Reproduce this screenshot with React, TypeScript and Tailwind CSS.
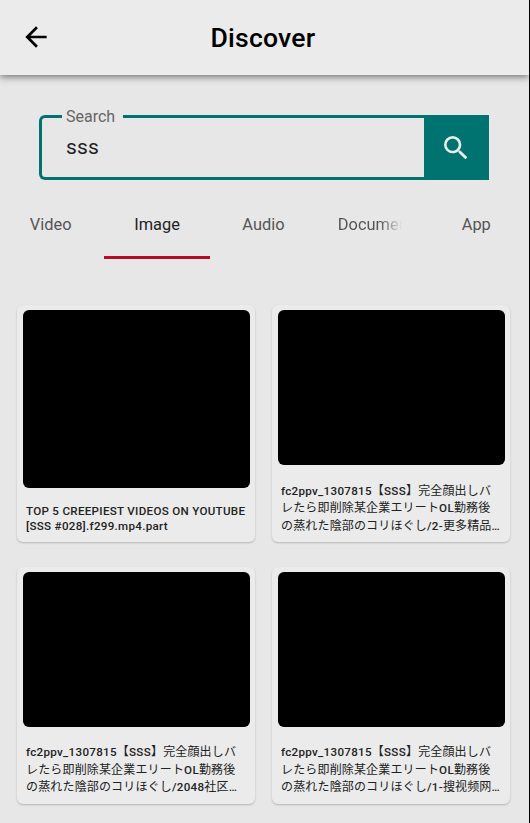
import React from "react";

type Item = { lines: string[]; tall?: boolean };

const tabs = ["Video", "Image", "Audio", "Documents", "App"];

const items: Item[] = [
  { lines: ["TOP 5 CREEPIEST VIDEOS ON YOUTUBE", "[SSS #028].f299.mp4.part"], tall: true },
  { lines: ["fc2ppv_1307815【SSS】完全顔出しバ", "レたら即削除某企業エリートOL勤務後", "の蒸れた陰部のコリほぐし/2-更多精品…"] },
  { lines: ["fc2ppv_1307815【SSS】完全顔出しバ", "レたら即削除某企業エリートOL勤務後", "の蒸れた陰部のコリほぐし/2048社区…"] },
  { lines: ["fc2ppv_1307815【SSS】完全顔出しバ", "レたら即削除某企業エリートOL勤務後", "の蒸れた陰部のコリほぐし/1-搜视频网…"] },
];

/* Latin runs are medium weight, Japanese and Chinese runs are regular. */
function Line({ text }: { text: string }) {
  const runs = text.match(/[\u0020-\u007e\u2026]+|[^\u0020-\u007e\u2026]+/g) ?? [];
  return (
    <div>
      {runs.map((run, i) =>
        /^[\u0020-\u007e\u2026]/.test(run) ? (
          <span key={i} className="text-[11.6px] font-medium tracking-[0.3px]">{run}</span>
        ) : (
          <span key={i} className="text-[12px] font-normal tracking-[0.16px]">{run}</span>
        )
      )}
    </div>
  );
}

function Card({ item }: { item: Item }) {
  return (
    <article className="h-[237px] w-[238px] rounded-md bg-[#ebebeb] px-[5.5px] pt-[5px] shadow-[0_1px_2px_rgba(0,0,0,0.22)]">
      <div className={item.tall ? "h-[178px] rounded-md bg-black" : "h-[155px] rounded-md bg-black"} />
      <div
        className={
          item.tall
            ? "pt-[16px] pl-[3.5px] text-[11.6px] leading-[15px] whitespace-pre text-[#222]"
            : "pt-[17.5px] pl-[3.5px] text-[12px] leading-[17.5px] whitespace-pre text-[#222]"
        }
      >
        {item.lines.map((line) => (
          <Line key={line} text={line} />
        ))}
      </div>
    </article>
  );
}

export default function App() {
  return (
    <div className="h-[823px] w-[530px] overflow-hidden border-r border-black bg-[#e7e7e7] font-[Roboto,'Noto_Sans_CJK_JP',sans-serif]">
      <header className="flex h-[75px] items-center bg-[#ebebeb] shadow-[0_2px_7px_rgba(0,0,0,0.5)]">
        <svg viewBox="0 0 24 24" className="mb-[1px] ml-[20px] h-8 w-8" fill="#000">
          <path d="M20 11H7.83l5.59-5.59L12 4l-8 8 8 8 1.41-1.41L7.83 13H20v-2z" />
        </svg>
        <h1 className="ml-[158.5px] text-[26.6px] leading-8 font-medium tracking-[0.2px] text-black">Discover</h1>
      </header>

      <div className="mt-[40px] ml-[38.5px] flex h-[65px] w-[450px]">
        <div className="relative flex flex-1 items-center rounded-l-md border-[3px] border-r-0 border-[#007371] pb-[2px] pl-[24.5px]">
          <span className="absolute -top-[11px] left-[20px] bg-[#e7e7e7] pr-[8px] pl-[4.5px] text-[16px] leading-5 text-[#666]">
            Search
          </span>
          <span className="text-[21px] leading-6 tracking-[0.2px] text-[#222]">sss</span>
        </div>
        <button className="flex w-[65px] items-center justify-center bg-[#007371] pr-[1px]">
          <svg viewBox="0 0 24 24" className="h-8 w-8" fill="#ebebeb">
            <path d="M15.5 14h-.79l-.28-.27A6.471 6.471 0 0 0 16 9.5 6.5 6.5 0 1 0 9.5 16c1.61 0 3.09-.59 4.23-1.57l.27.28v.79l5 4.99L20.49 19l-4.99-5zm-6 0C7.01 14 5 11.99 5 9.5S7.01 5 9.5 5 14 7.01 14 9.5 11.99 14 9.5 14z" />
          </svg>
        </button>
      </div>

      <nav className="mt-[10px] -ml-[2.5px] flex h-[69px] w-[532px]">
        {tabs.map((tab) => (
          <div
            key={tab}
            className={
              tab === "Image"
                ? "flex w-[106.4px] justify-center border-b-3 border-[#b50d28] pt-[25px] text-[16.4px] leading-5 text-[#222]"
                : "flex w-[106.4px] justify-center pt-[25px] text-[16.4px] leading-5 text-[#555]"
            }
          >
            {tab === "Documents" ? (
              <span className="w-[64px] overflow-hidden [mask-image:linear-gradient(to_right,black_65%,transparent)]">
                {tab}
              </span>
            ) : (
              tab
            )}
          </div>
        ))}
      </nav>

      <main className="mt-[46px] ml-[17px] grid w-[493px] grid-cols-[238px_238px] gap-x-[17px] gap-y-[24.5px]">
        {items.map((item, i) => (
          <Card key={i} item={item} />
        ))}
      </main>
    </div>
  );
}
